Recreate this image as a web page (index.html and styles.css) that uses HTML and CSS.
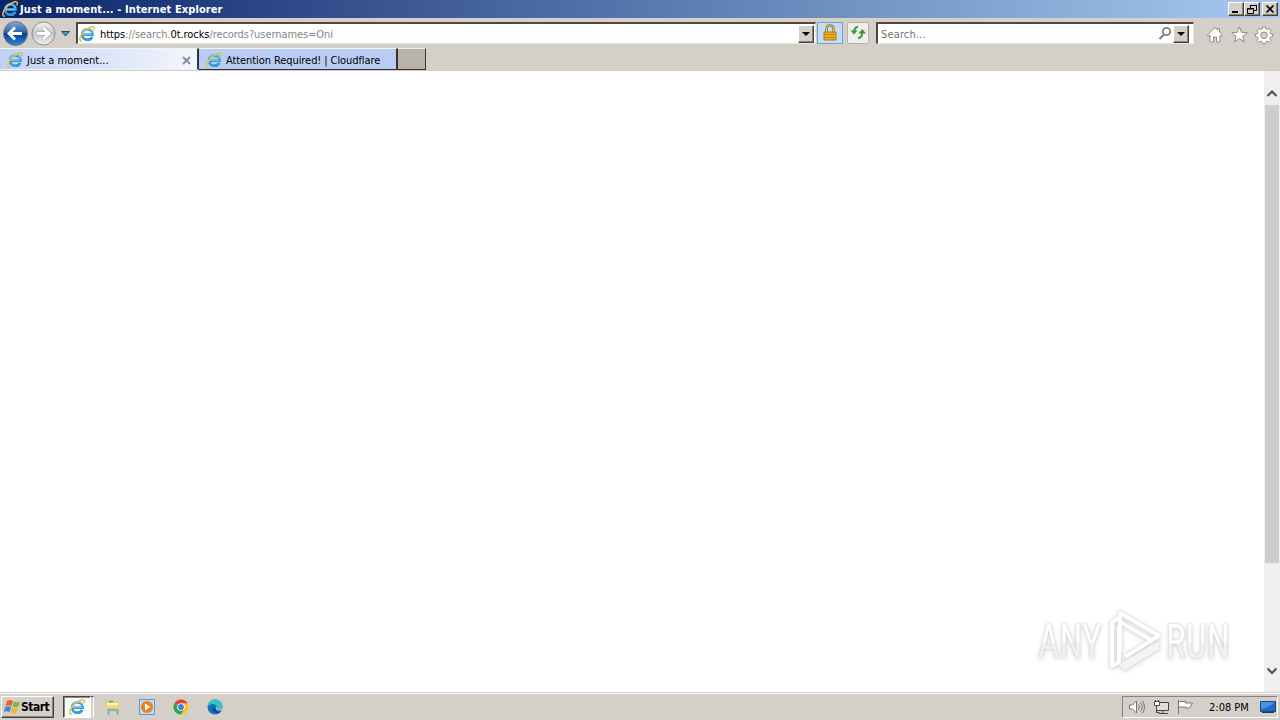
FILE: index.html
```html
<!DOCTYPE html>
<html lang="en">
<head>
    <meta charset="UTF-8">
    <title>Just a moment...</title>
    <link rel="stylesheet" href="styles.css">
</head>
<body>
<svg class="defs" width="0" height="0">
    <linearGradient id="blue" x1="0" y1="0" x2="0" y2="1">
        <stop offset="0" stop-color="#87a7d8"/>
        <stop offset=".48" stop-color="#2a5cad"/>
        <stop offset=".5" stop-color="#073d92"/>
        <stop offset="1" stop-color="#2f8be0"/>
    </linearGradient>
    <linearGradient id="gray" x1="0" y1="0" x2="0" y2="1">
        <stop offset="0" stop-color="#f4f4f4"/>
        <stop offset=".5" stop-color="#c4c6ca"/>
        <stop offset="1" stop-color="#f2f2f2"/>
    </linearGradient>
    <symbol id="ie" viewBox="0 0 16 16">
        <path d="M3.5 8.7h10C13.5 5 11.3 3.3 8.5 3.3S3.2 5.2 3.2 8.4s2.2 5.3 5.3 5.3c2.2 0 3.9-1 4.7-2.8" fill="none" stroke="#3399d8" stroke-width="2.7"/>
        <path d="M4 8.2h9M3.4 7.5C4 4.5 5.8 3 8.5 3s4.3 1.5 4.7 4" fill="none" stroke="#8bd8f6"/>
        <path d="M2.9 14.9C.2 15.6.2 12.5 2.4 9 5.5 4.1 11.9-.2 14.5.9c1.2.6 1 2 .2 3.4" fill="none" stroke="#e5c04b" stroke-width="1.5"/>
    </symbol>
</svg>

<div class="titlebar">
    <svg class="icon"><use href="#ie"/></svg>
    <span class="title">Just a moment... - Internet Explorer</span>
    <div class="window-buttons">
        <button><svg width="12" height="10"><path d="M2 8h6" stroke="#000" stroke-width="2"/></svg></button>
        <button><svg width="12" height="10"><path d="M4.5 4V1.5h6v5H8M4 1.5h7M1.5 4.5h6v5h-6zM1 5h7" fill="none" stroke="#000"/></svg></button>
        <button class="close"><svg width="12" height="10"><path d="M2.5 1.5l7 7M9.5 1.5l-7 7" stroke="#000" stroke-width="1.7"/></svg></button>
    </div>
</div>

<div class="navbar">
    <svg class="nav-buttons" width="76" height="30" viewBox="0 18 76 30">
        <circle cx="15.5" cy="33.5" r="12" fill="url(#blue)" stroke="#6c7888"/>
        <path d="M9 33.5h13M15 27.5l-6 6 6 6" fill="none" stroke="#fff" stroke-width="2.8"/>
        <circle cx="43.5" cy="33.5" r="11.5" fill="url(#gray)" stroke="#8a8d92"/>
        <path d="M37 33.5h12M43.5 28l5.5 5.5-5.5 5.5" fill="none" stroke="#aaa" stroke-width="4.4"/>
        <path d="M37 33.5h12M43.5 28l5.5 5.5-5.5 5.5" fill="none" stroke="#fff" stroke-width="3"/>
        <path d="M61.5 31.5h8l-4 4.5z" fill="#3b9bc4" stroke="#164f83"/>
    </svg>
    <div class="address field">
        <svg class="icon"><use href="#ie"/></svg>
        <div class="url"><span class="host">https</span><span>://search.</span><span class="host">0t.rocks</span><span>/records?usernames=Oni</span></div>
        <button class="drop"><svg width="8" height="4"><path d="M0 0h8L4 4z"/></svg></button>
    </div>
    <div class="lock">
        <svg width="16" height="18">
            <path d="M4.5 9V5q0-3.5 3.5-3.5T11.5 5v4" fill="none" stroke="#9a7620" stroke-width="2.4"/>
            <path d="M4.5 9V5q0-3.5 3.5-3.5T11.5 5v4" fill="none" stroke="#f1dc91" stroke-width=".8"/>
            <path d="M2 8h12v8H2z" fill="#e9ae26" stroke="#b57a10"/>
            <path d="M2 10.5h12M2 13.5h12" stroke="#c4881a"/>
        </svg>
    </div>
    <div class="refresh">
        <svg width="18" height="16">
            <path d="M9 2Q5 2 5 8M9 13q5 0 4-7" fill="none" stroke="#2f9a37" stroke-width="2"/>
            <path d="M1.5 5.5h7L5 9.5zM9.5 8.5H17L13.3 4z" fill="#2f9a37"/>
        </svg>
    </div>
    <div class="search field">
        <span class="placeholder">Search...</span>
        <svg width="16" height="16"><circle cx="9.5" cy="5.5" r="3.7" fill="#fff" stroke="#808080" stroke-width="1.8"/><path d="M7 8.5L2.5 13" stroke="#808080" stroke-width="2.2"/></svg>
        <button class="drop"><svg width="8" height="4"><path d="M0 0h8L4 4z"/></svg></button>
    </div>
    <svg class="tools" width="70" height="20" viewBox="0 0 70 20" fill="#fff" stroke="#8c8c8c">
        <path d="M1.5 10L9 2.5 11.5 5V3.5h2V7l3 3-1 1.3-1.5-1V17h-3.5v-5h-3v5H4v-6.7l-1.5 1z"/>
        <path d="M33.5 2l2.1 5.4 5.7.2-4.5 3.6 1.6 5.6-4.9-3.2-4.9 3.2 1.6-5.6-4.5-3.6 5.7-.2z"/>
        <path d="M56.5 2h3l.5 2 1.5.6 2-1.2 1.6 2-1.2 1.8.6 1.5 2 .5v2.4l-2 .5-.6 1.5 1.2 1.8-1.9 1.9-1.8-1.2-1.5.6-.4 2h-3l-.4-2-1.5-.6-1.8 1.2-1.9-1.9 1.2-1.8-.6-1.5-2-.5V9.2l2-.5.6-1.5-1.2-1.8 1.9-2 1.8 1.2 1.5-.6z"/>
        <circle cx="58" cy="10.3" r="3.3" fill="#d5cfc9"/>
    </svg>
</div>

<div class="tabs">
    <div class="tab active">
        <svg class="icon"><use href="#ie"/></svg>
        <span class="tab-text">Just a moment...</span>
        <svg class="tab-close" width="9" height="9"><path d="M1 1l7 7M8 1L1 8" stroke="#8190a3" stroke-width="1.9"/></svg>
    </div>
    <div class="tab">
        <svg class="icon"><use href="#ie"/></svg>
        <span class="tab-text second">Attention Required! | Cloudflare</span>
    </div>
    <div class="new-tab"></div>
</div>

<div class="page">
    <div class="watermark">
        <span>ANY</span>
        <svg width="60" height="64" viewBox="0 0 60 64" fill="none" stroke="#fff" stroke-width="4" stroke-linejoin="round">
            <path d="M15 42V4l39 22.5L20 48"/>
            <path d="M15 13l33 19M14 9l-7 4v44l7-4V17"/>
            <path d="M15 57l39-23M18 60l36-22" stroke="#f3f3f3"/>
        </svg>
        <span>RUN</span>
    </div>
    <div class="scrollbar">
        <svg width="12" height="8"><path d="M1.5 7L6 2.5 10.5 7" fill="none" stroke="#555" stroke-width="2.2"/></svg>
        <div class="thumb"></div>
        <svg class="down" width="12" height="8"><path d="M1.5 1.5L6 6l4.5-4.5" fill="none" stroke="#555" stroke-width="2.2"/></svg>
    </div>
</div>

<div class="taskbar">
    <button class="start">
        <svg width="17" height="16">
            <path d="M3 2q3-2 6 0L7.5 7q-3-1.5-6 0z" fill="#e46232"/>
            <path d="M10 2.5q3 1.5 6 0L14.5 7.5q-3 1.5-6 0z" fill="#7cb643"/>
            <path d="M1.2 8q3-1.5 6 0L5.7 13q-3-1.5-6 0z" fill="#428bcc"/>
            <path d="M8.2 8.5q3 1.5 6 0L12.7 14q-3 1.5-6 0z" fill="#f0bb32"/>
        </svg>
        <span>Start</span>
    </button>
    <div class="task"><svg class="icon"><use href="#ie"/></svg></div>
    <div class="task-edge"></div>
    <div class="quick">
        <!-- explorer -->
        <svg width="16" height="16">
            <path d="M1 2h5l1 1h7v11H1z" fill="#e9cd6c"/>
            <path d="M2 4h11v4H2z" fill="#fff5bd"/>
            <path d="M4 2.5h4" stroke="#54ad58" stroke-width="1.5"/>
            <path d="M1 6h14v8H1z" fill="#f0d67c"/>
            <path d="M3.5 15.5V11h9v4.5" fill="none" stroke="#76b5d6" stroke-width="2.5"/>
        </svg>
        <!-- media player -->
        <svg width="16" height="16">
            <path d="M.5.5h15v15H.5z" fill="#b9def6" stroke="#5b9bc9"/>
            <circle cx="8" cy="8" r="6" fill="#f17e16"/>
            <path d="M6 4.5v7L11.5 8z" fill="#fff"/>
        </svg>
        <!-- chrome -->
        <svg width="16" height="16">
            <circle cx="8" cy="8" r="7.5" fill="#f8c51c"/>
            <path d="M8 8L1.5 4.25A7.5 7.5 0 0 1 14.5 4.25H8z" fill="#df4435"/>
            <path d="M1.5 4.25A7.5 7.5 0 0 0 8 15.5l3.2-5.6L8 8z" fill="#30a350"/>
            <circle cx="8" cy="8" r="3.8" fill="#fff"/>
            <circle cx="8" cy="8" r="2.9" fill="#3f7bea"/>
        </svg>
        <!-- edge -->
        <svg width="16" height="16">
            <circle cx="8" cy="8" r="7.5" fill="#176fbf"/>
            <path d="M.5 8C1 3 4 .5 8 .5c4.5 0 7.5 3 7.5 6.5 0 2.5-2 3.5-4 3.5-1.5 0-2.5-.6-1.5-2C10 4.5 3 3.5.5 8z" fill="#35c4c5"/>
            <path d="M6 7.5q-2 4 2 6 3 1.5 6-1-5 1-5.5-2.5z" fill="#0b4d93"/>
            <path d="M9 7.5q-1 4 3.5 4 2 0 3.5-1.5l-.5-1q-2 1.5-4 1.5-1.5 0-1.5-1z" fill="#d4d0c8"/>
        </svg>
    </div>
    <div class="tray">
        <svg width="66" height="18" viewBox="0 0 66 18" fill="#fff" stroke="#777">
            <path d="M1.5 7h3L8.500 3v12l-4-4h-3z"/>
            <path d="M10.5 6.5q2 2.5 0 5M12.5 4.5q3.5 4.5 0 9M14.5 3q4 6 0 12" fill="none"/>
            <path d="M28.5 4.5h12v8h-12zM31 15.5h9M35 13v2" fill="#ddd" stroke="#444"/>
            <path d="M28.5 8v6.5h3" fill="none" stroke="#444"/>
            <path d="M26.5 3.5h5v4h-5zM27.5 2v2M30.5 2v2" stroke="#444"/>
            <path d="M50.5 2v14M50.5 3.5h7V5h7l-3 5h-4V9h-7z"/>
        </svg>
        <span class="clock">2:08 PM</span>
        <svg class="desktop" width="16" height="14"><path d="M.5 1.5h15v10H.5z" fill="#206bc1" stroke="#174a87"/><path d="M1 9Q9 8 14.5 2H1z" fill="#4a94df"/><path d="M2 12.5h12" stroke="#193960"/></svg>
    </div>
</div>
</body>
</html>
```
FILE: styles.css
```css
* {
    box-sizing: border-box;
}

body {
    margin: 0;
    width: 1280px;
    height: 720px;
    overflow: hidden;
    display: flex;
    flex-direction: column;
    background: #d5cfc9;
    font: 11px "DejaVu Sans Condensed", "DejaVu Sans", sans-serif;
    font-stretch: condensed;
    color: #000;
    white-space: nowrap;
}

svg {
    display: block;
    flex-shrink: 0;
}

.defs {
    position: absolute;
}

.icon {
    width: 16px;
    height: 16px;
}

button {
    display: flex;
    align-items: center;
    justify-content: center;
    padding: 0;
    border: 1px solid;
    border-color: #fff #404040 #404040 #fff;
    box-shadow: inset -1px -1px #87837d;
    background: #d5cfc9;
    font: inherit;
}

.titlebar {
    height: 18px;
    display: flex;
    align-items: center;
    padding: 0 2px;
    background: linear-gradient(90deg, #0a246a, #a6caf0);
}

.title {
    margin-left: 2px;
    color: #fff;
    font-weight: bold;
    letter-spacing: 0.1px;
}

.window-buttons {
    display: flex;
    margin-left: auto;
}

.window-buttons button {
    width: 16px;
    height: 14px;
}

.window-buttons .close {
    margin-left: 2px;
}

.navbar {
    height: 30px;
    display: flex;
    align-items: flex-start;
    border-top: 1px solid #d8d3c5;
}

.nav-buttons {
    margin-top: -1px;
}

.field {
    height: 22px;
    margin-top: 3px;
    display: flex;
    align-items: center;
    background: #fff;
    border: 1px solid #eae6e0;
    border-top: 2px solid #4d4842;
    border-left: 2px solid #4d4842;
}

.address {
    width: 740px;
    padding: 0 1px;
}

.url {
    display: flex;
    margin: 1px 0 0 5px;
    color: #858585;
    letter-spacing: -0.07px;
}

.host {
    color: #000;
}

.drop {
    width: 16px;
    height: 18px;
    margin-left: auto;
}

.lock, .refresh {
    height: 22px;
    margin-top: 3px;
    display: flex;
    align-items: center;
    justify-content: center;
}

.lock {
    width: 26px;
    margin-left: 1px;
    background: #c5dcf7;
    border: 1px solid #6f9fd8;
}

.refresh {
    width: 22px;
    margin-left: 4px;
    background: #eeefec;
    border: 1px solid #b5b3b0;
    border-radius: 2px;
}

.search {
    width: 318px;
    margin-left: 7px;
    padding-right: 4px;
}

.placeholder {
    margin: 1px auto 0 3px;
    color: #747474;
    letter-spacing: 0.15px;
}

.search .drop {
    margin-left: 0;
}

.tools {
    margin: 6px 0 0 12px;
}

.tabs {
    height: 23px;
    display: flex;
    border-bottom: 1px solid #d0cbc4;
}

.tab {
    width: 199px;
    height: 22px;
    display: flex;
    align-items: center;
    padding: 2px 0 0 7px;
    background: #b9cdf4;
    border-top: 1px solid #f5f5f5;
    border-right: 2px solid #333;
    border-bottom: 1px solid #333;
}

.tab.active {
    background: linear-gradient(90deg, #c0d0f4, #f3f6fd);
    border-bottom-color: #edf1fa;
}

.tab-text {
    margin-left: 4px;
}

.tab-text.second {
    letter-spacing: -0.08px;
}

.tab-close {
    margin: 0 6px 0 auto;
}

.new-tab {
    width: 28px;
    height: 22px;
    background: #b9b2a9;
    border: 1px solid #333;
    border-top-color: #eee;
    border-left: 0;
}

.page {
    height: 621px;
    position: relative;
    display: flex;
    justify-content: flex-end;
    background: #fff;
}

.scrollbar {
    width: 16px;
    padding: 18px 1px 0;
    background: #efefef;
}

.scrollbar svg {
    margin-left: 1px;
}

.thumb {
    height: 458px;
    margin-top: 8px;
    background: #cdcdcd;
}

.scrollbar .down {
    margin-top: 104px;
}

/* overlay logo */
.watermark {
    position: absolute;
    right: 46px;
    bottom: 19px;
    width: 196px;
    height: 64px;
    display: flex;
    align-items: center;
    color: #fff;
    font-family: Roboto, sans-serif;
    font-size: 49px;
    font-weight: 400;
    filter: drop-shadow(0 0 1px #ccc) drop-shadow(0 1px 2px #ddd);
}

.watermark span {
    display: block;
    background: linear-gradient(#fff 52%, #f1f1f1 52%);
    background-clip: text;
    -webkit-background-clip: text;
    color: transparent;
    min-width: max-content;
    margin-right: -22px;
    transform: scaleX(.76);
    transform-origin: left center;
}

.watermark svg {
    margin: 0 1px 0 5px;
}

.taskbar {
    height: 28px;
    display: flex;
    align-items: flex-start;
    padding: 3px 2px 0 1px;
    border-top: 1px solid #d4d0c8;
    box-shadow: inset 0 1px #fff;
}

.start {
    width: 53px;
    height: 22px;
    justify-content: flex-start;
    padding-left: 2px;
    font-size: 12px;
    font-weight: bold;
}

.start span {
    letter-spacing: -0.5px;
}

.task {
    width: 28px;
    height: 22px;
    margin-left: 9px;
    display: flex;
    align-items: center;
    justify-content: center;
    background: #fbfaf8;
    border: 1px solid #fff;
    border-top-color: #444;
    border-left-color: #444;
    box-shadow: inset 1px 1px #8a8680;
}

.task-edge {
    width: 3px;
    height: 22px;
    border-top: 1px solid #444;
    border-right: 1px solid #fff;
}

.quick {
    display: flex;
    gap: 18px;
    margin: 3px 0 0 11px;
}

.tray {
    width: 156px;
    height: 22px;
    margin-left: auto;
    display: flex;
    align-items: center;
    padding: 0 1px 0 5px;
    border: 1px solid #fff;
    border-top-color: #87837d;
    border-left-color: #87837d;
}

.clock {
    margin-left: 15px;
}

.desktop {
    margin-left: auto;
}
```
